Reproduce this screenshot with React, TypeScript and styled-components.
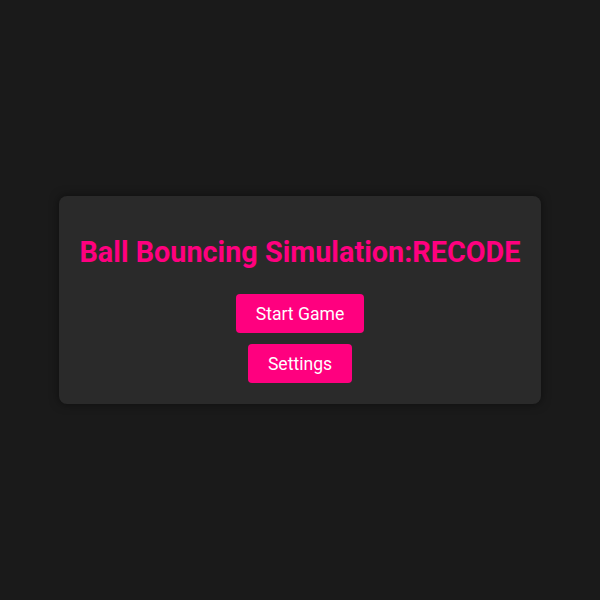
import React from "react";
import styled, { createGlobalStyle } from "styled-components";

const GlobalStyle = createGlobalStyle`
  html, body {
    margin: 0;
    padding: 0;
    background: #1a1a1a;
    font-family: Roboto, "Liberation Sans", sans-serif;
  }
`;

const Screen = styled.div`
  width: 100%;
  height: 100vh;
  display: flex;
  justify-content: center;
  align-items: center;
`;

const Menu = styled.div`
  width: 482px;
  box-sizing: border-box;
  padding: 20px 20px 21px;
  display: flex;
  flex-direction: column;
  align-items: center;
  gap: 11px;
  background: #2a2a2a;
  border-radius: 8px;
  box-shadow: 0 0 10px rgba(0, 0, 0, 0.5);
`;

const Title = styled.h1`
  margin: 19px 0 14px;
  font-size: 28.8px;
  font-weight: 700;
  line-height: 34px;
  color: #ff007f;
  white-space: nowrap;
`;

const MenuButton = styled.button`
  padding: 10px 20px 8px;
  font-family: Roboto, "Liberation Sans", sans-serif;
  font-size: 17.6px;
  line-height: 21px;
  color: #ffffff;
  background: #ff007f;
  border: none;
  border-radius: 4px;
  cursor: pointer;
`;

const App = () => {
  return (
    <>
      <GlobalStyle />
      <Screen>
        <Menu>
          <Title>Ball Bouncing Simulation:RECODE</Title>
          <MenuButton>Start Game</MenuButton>
          <MenuButton>Settings</MenuButton>
        </Menu>
      </Screen>
    </>
  );
};

export default App;
